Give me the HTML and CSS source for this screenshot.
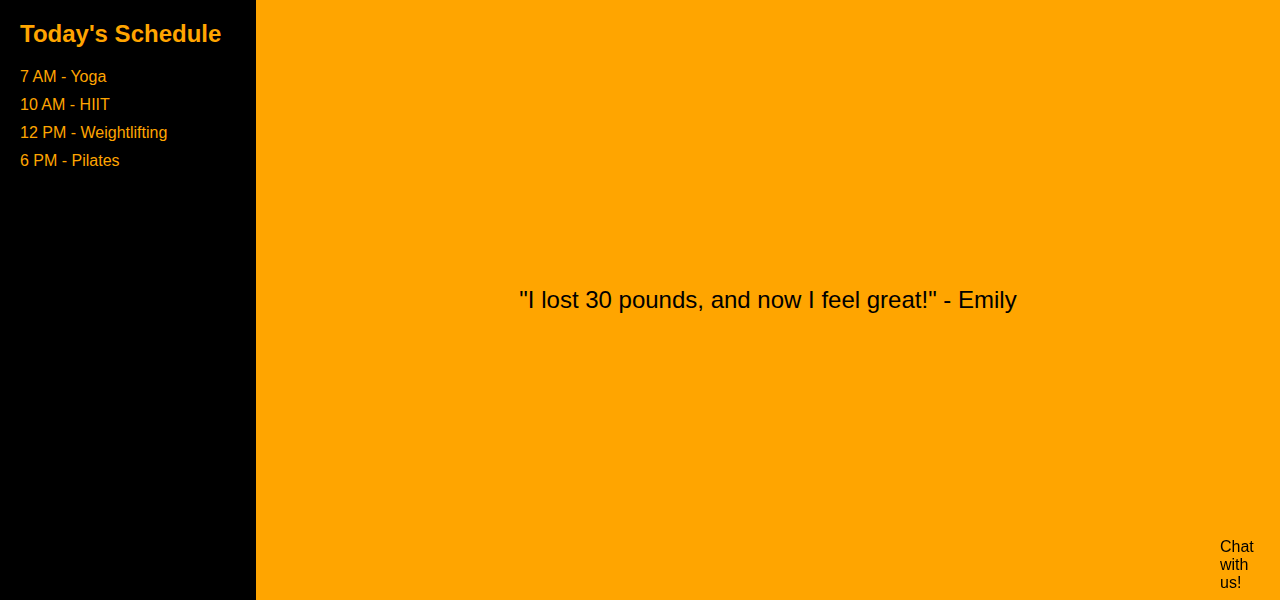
FILE: index.html
```html
<!DOCTYPE html>
<html>
<head>
<meta charset="utf-8">
<link rel="stylesheet" href="styles.css">
</head>
<body>
<div class="layout">
  <aside class="sidebar">
    <h2 class="title">Today's Schedule</h2>
    <ul class="schedule">
      <li>7 AM - Yoga</li>
      <li>10 AM - HIIT</li>
      <li>12 PM - Weightlifting</li>
      <li>6 PM - Pilates</li>
    </ul>
  </aside>
  <main class="main">
    <p class="quote">"I lost 30 pounds, and now I feel great!" - Emily</p>
  </main>
</div>
<div class="chat">Chat with us!</div>
</body>
</html>
```
FILE: styles.css
```css
html, body {
  margin: 0;
  padding: 0;
  height: 100%;
}
body {
  font-family: "Liberation Sans", Arial, sans-serif;
  background: #FFA500;
}
.layout {
  display: flex;
  height: 100vh;
}
.sidebar {
  width: 216px;
  flex: none;
  background: #000;
  color: #FFA500;
  padding: 20px;
}
.title {
  margin: 0 0 20px;
  font-size: 24px;
  font-weight: bold;
}
.schedule {
  list-style: none;
  margin: 0;
  padding: 0;
  font-size: 16px;
}
.schedule li {
  line-height: 18px;
  margin-bottom: 10px;
}
.main {
  flex: 1;
  display: flex;
  align-items: center;
  justify-content: center;
  background: #FFA500;
}
.quote {
  margin: 0;
  font-size: 24px;
  color: #000;
}
.chat {
  position: fixed;
  right: 20px;
  bottom: 8px;
  width: 40px;
  font-size: 16px;
  line-height: 18px;
  color: #000;
}
```
